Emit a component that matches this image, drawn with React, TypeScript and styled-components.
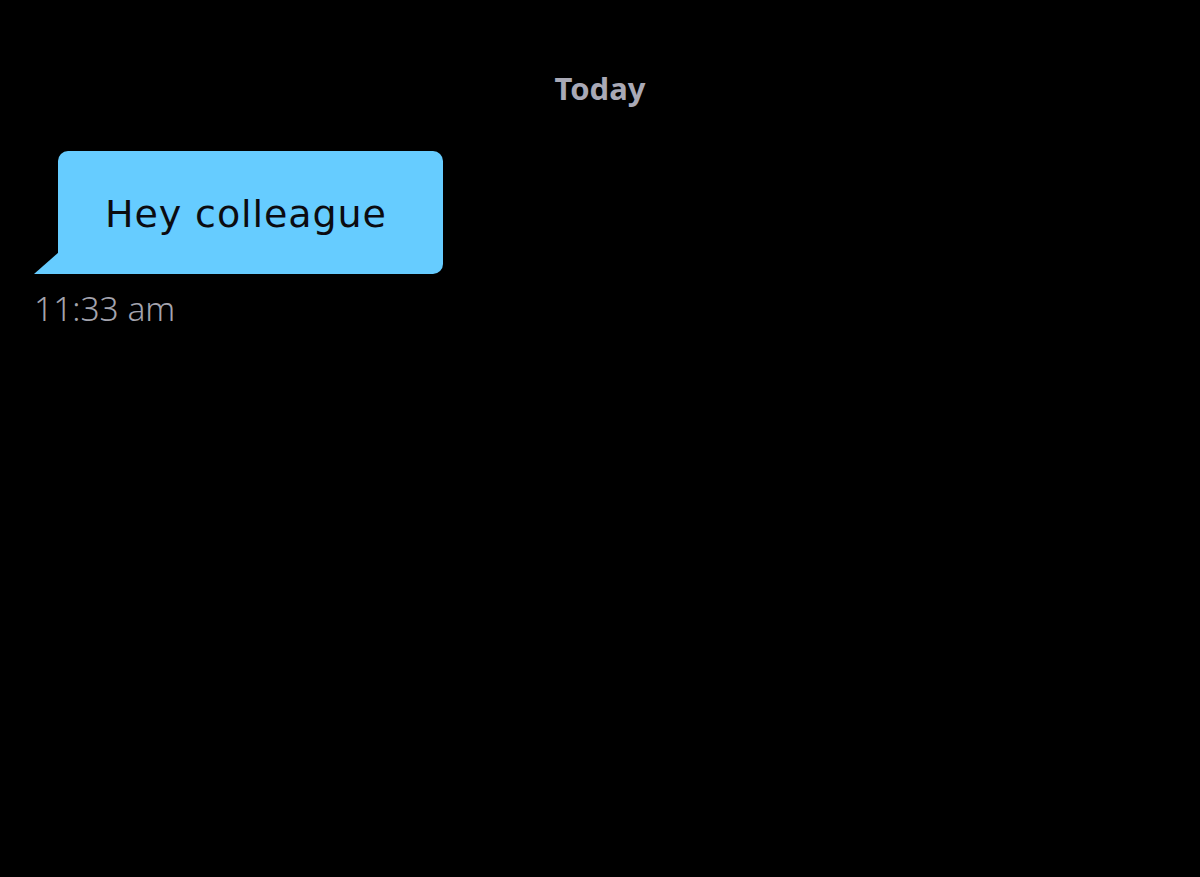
import React from "react";
import styled, { createGlobalStyle } from "styled-components";

const GlobalStyle = createGlobalStyle`
  html, body {
    margin: 0;
    padding: 0;
    background: #000000;
  }
  body {
    font-family: "Noto Sans", "Open Sans", Arial, sans-serif;
    -webkit-font-smoothing: antialiased;
  }
`;

const Screen = styled.div`
  width: 1200px;
  height: 877px;
  background: #000000;
  padding: 66px 34px 0;
  box-sizing: border-box;
  display: flex;
  flex-direction: column;
`;

const DayLabel = styled.div`
  align-self: center;
  color: #a9a9b6;
  font-size: 31px;
  font-weight: 700;
  line-height: 44px;
`;

const MessageGroup = styled.div`
  margin-top: 41px;
  display: flex;
  flex-direction: column;
  align-items: flex-start;
`;

const Bubble = styled.div<{ $incoming?: boolean }>`
  position: relative;
  margin-left: 24px;
  height: 123px;
  padding: 2px 56px 0 47px;
  box-sizing: border-box;
  display: flex;
  align-items: center;
  background: #66ccff;
  color: #0b0b10;
  font-family: "DejaVu Sans", "Noto Sans", sans-serif;
  font-size: 38px;
  letter-spacing: 0.9px;
  border-radius: ${(p) => (p.$incoming ? "10px 10px 10px 0" : "10px 10px 0 10px")};

  &::before {
    content: "";
    position: absolute;
    left: -24px;
    bottom: 0;
    width: 25px;
    height: 22px;
    background: #66ccff;
    clip-path: polygon(100% 0, 100% 100%, 0 100%);
  }
`;

const Time = styled.div`
  margin-top: 12px;
  color: #a4a4ae;
  font-size: 33.5px;
  font-weight: 300;
  line-height: 44px;
`;

export default function App() {
  return (
    <>
      <GlobalStyle />
      <Screen>
        <DayLabel>Today</DayLabel>
        <MessageGroup>
          <Bubble $incoming>Hey colleague</Bubble>
          <Time>11:33 am</Time>
        </MessageGroup>
      </Screen>
    </>
  );
}
